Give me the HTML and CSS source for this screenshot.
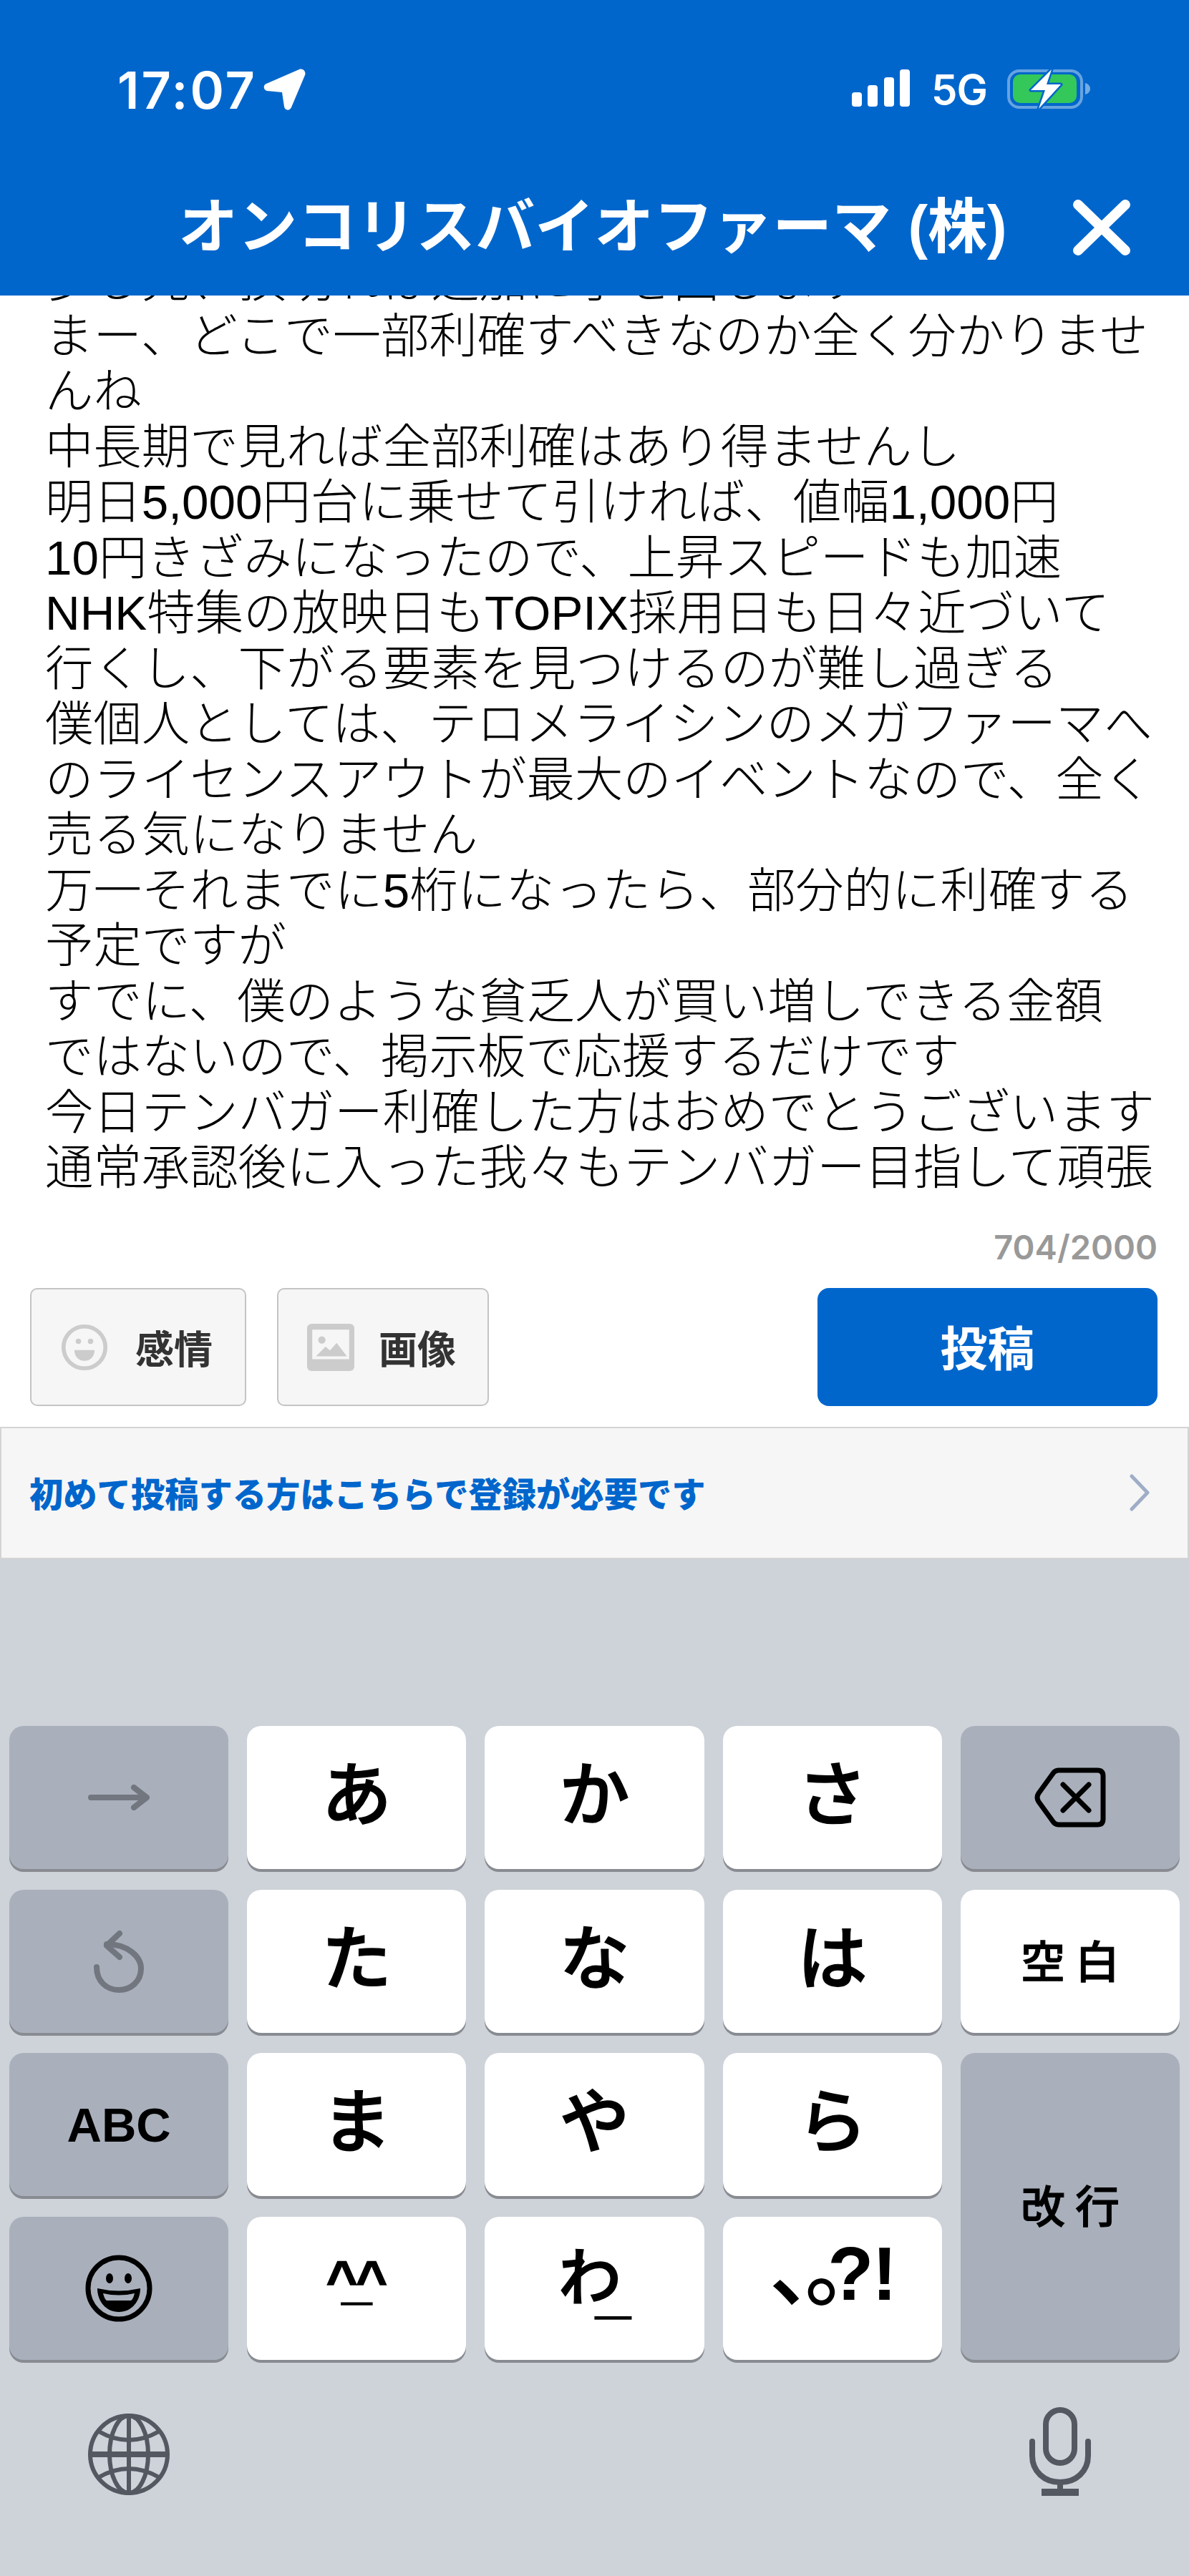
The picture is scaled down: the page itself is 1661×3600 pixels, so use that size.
FILE: index.html
```html
<!DOCTYPE html>
<html lang="ja">
  <head>
    <meta charset="UTF-8" />
    <meta name="viewport" content="width=device-width, initial-scale=1.0" />
    <title>オンコリスバイオファーマ (株)</title>
    <link rel="stylesheet" href="styles.css">
  </head>
  <body>
    <div class="header">
      <div class="status-bar">
        <div class="status-left">
          <span class="time">17:07</span>
          <svg class="location-icon" viewBox="0 0 60 58" fill="#fff">
            <path d="M51 1 5 21c-5 2-4 9 1 10l21 2 3 20c1 6 8 6 10 1L59 9c2-5-3-10-8-8z" />
          </svg>
        </div>
        <div class="status-right">
          <div class="signal">
            <div class="bar bar-1"></div>
            <div class="bar bar-2"></div>
            <div class="bar bar-3"></div>
            <div class="bar bar-4"></div>
          </div>
          <span class="network">5G</span>
          <svg class="battery-icon" viewBox="0 0 116 58">
            <rect x="2" y="3" width="102" height="51" rx="15" fill="none" stroke="#fff" stroke-opacity="0.4" stroke-width="4" />
            <rect x="8" y="8" width="89" height="40" rx="10" fill="#34c759" />
            <path d="M109 20c4 1 7 4 7 8s-3 7-7 8z" fill="#fff" fill-opacity="0.45" />
            <path d="M62 1 33 30h20l-9 26 31-34H55z" fill="#fff" stroke="#0066cc" stroke-width="5" stroke-linejoin="round" paint-order="stroke" />
          </svg>
        </div>
      </div>
      <div class="title-bar">
        <div></div>
        <h1 class="title">オンコリスバイオファーマ (株)</h1>
        <svg class="close-icon" viewBox="0 0 82 80" fill="none" stroke="#fff" stroke-width="14" stroke-linecap="round">
          <path d="M8 8 74 72M74 8 8 72" />
        </svg>
      </div>
    </div>

    <div class="post-text">
      <div class="post-lines">
        少し先、損切れば追加に手を出します<br>
        まー、どこで一部利確すべきなのか全く分かりませ<br>
        んね<br>
        中長期で見れば全部利確はあり得ませんし<br>
        明日5,000円台に乗せて引ければ、値幅1,000円<br>
        10円きざみになったので、上昇スピードも加速<br>
        NHK特集の放映日もTOPIX採用日も日々近づいて<br>
        行くし、下がる要素を見つけるのが難し過ぎる<br>
        僕個人としては、テロメライシンのメガファーマへ<br>
        のライセンスアウトが最大のイベントなので、全く<br>
        売る気になりません<br>
        万一それまでに5桁になったら、部分的に利確する<br>
        予定ですが<br>
        すでに、僕のような貧乏人が買い増しできる金額<br>
        ではないので、掲示板で応援するだけです<br>
        今日テンバガー利確した方はおめでとうございます<br>
        通常承認後に入った我々もテンバガー目指して頑張
      </div>
    </div>

    <div class="counter">704/2000</div>

    <div class="tool-row">
      <button class="tool-button emotion-button">
        <svg class="tool-icon" viewBox="0 0 70 70">
          <circle cx="35" cy="35" r="31" fill="none" stroke="#ccc" stroke-width="6" />
          <circle cx="26" cy="26" r="4" fill="#ccc" />
          <circle cx="44" cy="26" r="4" fill="#ccc" />
          <path d="M20 39h30c0 9-6 16-15 16s-15-7-15-16z" fill="#ccc" />
        </svg>
        感情
      </button>
      <button class="tool-button image-button">
        <svg class="tool-icon" viewBox="0 0 64 64">
          <rect width="64" height="64" rx="6" fill="#ccc" />
          <rect x="7" y="8" width="50" height="40" fill="#f6f6f6" />
          <circle cx="20" cy="22" r="5" fill="#ccc" />
          <path d="M12 44 25 31l6 5 9-10 14 18z" fill="#ccc" />
        </svg>
        画像
      </button>
      <button class="post-button">投稿</button>
    </div>

    <div class="register-link">
      <span>初めて投稿する方はこちらで登録が必要です</span>
      <svg class="chevron" viewBox="0 0 30 52" fill="none" stroke="#9fadc7" stroke-width="5" stroke-linecap="round" stroke-linejoin="round">
        <path d="M4 3 26 26 4 49" />
      </svg>
    </div>

    <div class="keyboard">
      <div class="keys">
        <div class="key key-dark">
          <svg class="key-arrow" viewBox="0 0 86 36" fill="none" stroke="#72767f" stroke-width="8" stroke-linecap="round" stroke-linejoin="round">
            <path d="M4 18h78M64 4l18 14-18 14" />
          </svg>
        </div>
        <div class="key kana">あ</div>
        <div class="key kana">か</div>
        <div class="key kana">さ</div>
        <div class="key key-dark">
          <svg class="key-delete" viewBox="0 0 100 84" fill="none" stroke="#000" stroke-width="7" stroke-linecap="round" stroke-linejoin="round">
            <path d="M34 4h54q8 0 8 8v60q0 8-8 8H34q-4 0-7-3L6 48q-4-6 0-12L27 7q3-3 7-3z" />
            <path d="M40 24 76 60M76 24 40 60" />
          </svg>
        </div>

        <div class="key key-dark">
          <svg class="key-undo" viewBox="0 0 74 88" fill="none" stroke="#72767f" stroke-width="8" stroke-linecap="round" stroke-linejoin="round">
            <path d="M20 20C50 20 68 38 68 54c0 18-14 30-31 30C20 84 6 72 6 52" />
            <path d="M38 5 20 22 38 38" />
          </svg>
        </div>
        <div class="key kana">た</div>
        <div class="key kana">な</div>
        <div class="key kana">は</div>
        <div class="key key-word space-key">空白</div>

        <div class="key key-dark key-abc">ABC</div>
        <div class="key kana">ま</div>
        <div class="key kana">や</div>
        <div class="key kana">ら</div>
        <div class="key key-dark key-word enter-key">改行</div>

        <div class="key key-dark">
          <svg class="key-emoji" viewBox="0 0 94 94">
            <circle cx="47" cy="47" r="43" fill="none" stroke="#000" stroke-width="7" />
            <ellipse cx="34" cy="33" rx="5" ry="7" fill="#000" />
            <ellipse cx="60" cy="33" rx="5" ry="7" fill="#000" />
            <path d="M17 47q30 7 60 0c0 18-12 33-30 33S17 65 17 47z" fill="#000" />
            <path d="M25 54q22 5 44 0-2 8-5 10H30q-3-2-5-10z" fill="#a9b0bb" />
          </svg>
        </div>
        <div class="key face-key"><span>^_^</span></div>
        <div class="key wa-key"><span>わ<span class="wa-line">_</span></span></div>
        <div class="key punct-key"><span class="punct">、。</span><span class="marks">?!</span></div>
      </div>

      <div class="keyboard-bottom">
        <svg class="globe-icon" viewBox="0 0 116 116" fill="none" stroke="#535861" stroke-width="6">
          <circle cx="58" cy="58" r="54" />
          <ellipse cx="58" cy="58" rx="27" ry="54" />
          <path d="M58 4v108" />
          <path d="M4 58h108" stroke-width="8" />
          <path d="M16 26q42 24 84 0M16 90q42-24 84 0" />
        </svg>
        <svg class="mic-icon" viewBox="0 0 88 124" fill="none" stroke="#535861" stroke-width="8" stroke-linecap="round">
          <rect x="24" y="4" width="40" height="74" rx="20" />
          <path d="M5 48v20c0 22 17 37 39 37s39-15 39-37V48" />
          <path d="M44 105v14" />
          <path d="M18 119h52" stroke-width="10" stroke-linecap="butt" />
        </svg>
      </div>
    </div>
  </body>
</html>
```

FILE: styles.css
```css
* {
  margin: 0;
  padding: 0;
  box-sizing: border-box;
}

body {
  width: 1661px;
  height: 3600px;
  overflow: hidden;
  background: #fff;
  color: #000;
  font-family: "Liberation Sans", "Noto Sans CJK JP", sans-serif;
}

.header {
  height: 413px;
  padding-top: 95px;
  background: #0066cc;
  color: #fff;
}

.status-bar {
  display: flex;
  justify-content: space-between;
  align-items: center;
  height: 60px;
  padding: 0 138px 0 164px;
}

.status-left {
  display: flex;
  align-items: center;
  gap: 8px;
}

.time {
  font-family: Inter, sans-serif;
  font-size: 72px;
  font-weight: 600;
  letter-spacing: 3px;
}

.location-icon {
  width: 60px;
  height: 58px;
}

.status-right {
  display: flex;
  align-items: center;
}

.signal {
  display: flex;
  align-items: flex-end;
  gap: 8.5px;
  margin-top: -4px;
}

.bar {
  width: 14px;
  background: #fff;
  border-radius: 4px;
}

.bar-1 {
  height: 20px;
}

.bar-2 {
  height: 30px;
}

.bar-3 {
  height: 41px;
}

.bar-4 {
  height: 52px;
}

.network {
  margin: 0 28px 0 30px;
  font-family: Inter, sans-serif;
  font-size: 58px;
  font-weight: 600;
  letter-spacing: -1px;
}

.battery-icon {
  width: 116px;
  height: 58px;
}

.title-bar {
  display: grid;
  grid-template-columns: 1fr auto 1fr;
  align-items: center;
  height: 90px;
  margin-top: 118px;
  padding: 0 81px 0 76px;
}

.title {
  font-size: 83px;
  font-weight: 700;
  line-height: 90px;
  white-space: nowrap;
}

.close-icon {
  justify-self: end;
  width: 82px;
  height: 80px;
}

.post-text {
  height: 1300px;
  padding-left: 63px;
  overflow: hidden;
}

.post-lines {
  margin-top: -60px;
  font-size: 67.4px;
  font-weight: 300;
  line-height: 77.5px;
  white-space: nowrap;
}

.counter {
  height: 60px;
  padding-right: 44px;
  color: #999;
  font-family: Inter, sans-serif;
  font-size: 47px;
  font-weight: 600;
  line-height: 60px;
  text-align: right;
}

.tool-row {
  display: flex;
  height: 165px;
  margin-top: 27px;
  padding: 0 44px 0 42px;
}

.tool-button {
  display: flex;
  align-items: center;
  height: 100%;
  background: #f6f6f6;
  border: 2px solid #c4c4c4;
  border-radius: 10px;
  color: #333;
  font-family: inherit;
  font-size: 54px;
  font-weight: 700;
}

.emotion-button {
  width: 302px;
  gap: 38px;
  padding-left: 41px;
}

.image-button {
  width: 296px;
  gap: 34px;
  margin-left: 43px;
  padding-left: 40px;
}

.tool-icon {
  flex-shrink: 0;
  width: 66px;
  height: 66px;
}

.post-button {
  width: 475px;
  margin-left: auto;
  padding-bottom: 5px;
  background: #0066cc;
  border: none;
  border-radius: 16px;
  color: #fff;
  font-family: inherit;
  font-size: 66px;
  font-weight: 700;
}

.register-link {
  display: flex;
  justify-content: space-between;
  align-items: center;
  height: 185px;
  margin-top: 29px;
  padding: 0 52px 2px 39px;
  background: #f6f6f6;
  border: 2px solid #d4d4d4;
  color: #0066cc;
  font-size: 47.3px;
  font-weight: 900;
}

.chevron {
  width: 30px;
  height: 52px;
}

.keyboard {
  height: 1421px;
  padding: 233px 13px 0;
  background: #ced2d9;
}

.keys {
  display: grid;
  grid-template-columns: repeat(5, 1fr);
  grid-auto-rows: 200px;
  gap: 28.5px 26px;
}

.key {
  display: flex;
  justify-content: center;
  align-items: center;
  background: #fff;
  border-radius: 20px;
  box-shadow: 0 4px 0 #888b91;
  font-weight: 700;
}

.key-dark {
  background: #a9b0bb;
}

.kana {
  padding-bottom: 24px;
  font-size: 98px;
  font-weight: 500;
  -webkit-text-stroke: 1.5px #000;
}

.key-word {
  padding-bottom: 6px;
  font-size: 62px;
  font-weight: 500;
  letter-spacing: 14px;
  text-indent: 14px;
  -webkit-text-stroke: 1px #000;
}

.enter-key {
  grid-column: 5;
  grid-row: 3 / 5;
}

.key-abc {
  font-size: 67px;
}

.face-key span {
  margin-right: 22px;
  margin-bottom: 24px;
  font-size: 75px;
  letter-spacing: -22px;
  -webkit-text-stroke: 1.5px #000;
}

.wa-key span {
  margin-right: 36px;
  margin-bottom: 32px;
  font-size: 88px;
  font-weight: 500;
  letter-spacing: -36px;
  -webkit-text-stroke: 1.5px #000;
}

.wa-key .wa-line {
  margin: 0;
  font-weight: 700;
  vertical-align: -16px;
}

.punct-key {
  align-items: baseline;
  padding-top: 14px;
}

.punct {
  margin-right: -18px;
  font-size: 120px;
  font-weight: 500;
  line-height: 1;
  letter-spacing: -70px;
  text-spacing-trim: space-all;
}

.marks {
  font-size: 105px;
  line-height: 1;
  letter-spacing: -2px;
}

.key-arrow {
  width: 86px;
  height: 36px;
}

.key-delete {
  width: 100px;
  height: 84px;
}

.key-undo {
  width: 74px;
  height: 88px;
}

.key-emoji {
  width: 94px;
  height: 94px;
}

.keyboard-bottom {
  display: flex;
  justify-content: space-between;
  align-items: flex-end;
  height: 190px;
  padding: 0 123px 0 109px;
}

.globe-icon {
  width: 116px;
  height: 116px;
}

.mic-icon {
  width: 88px;
  height: 124px;
}
```
